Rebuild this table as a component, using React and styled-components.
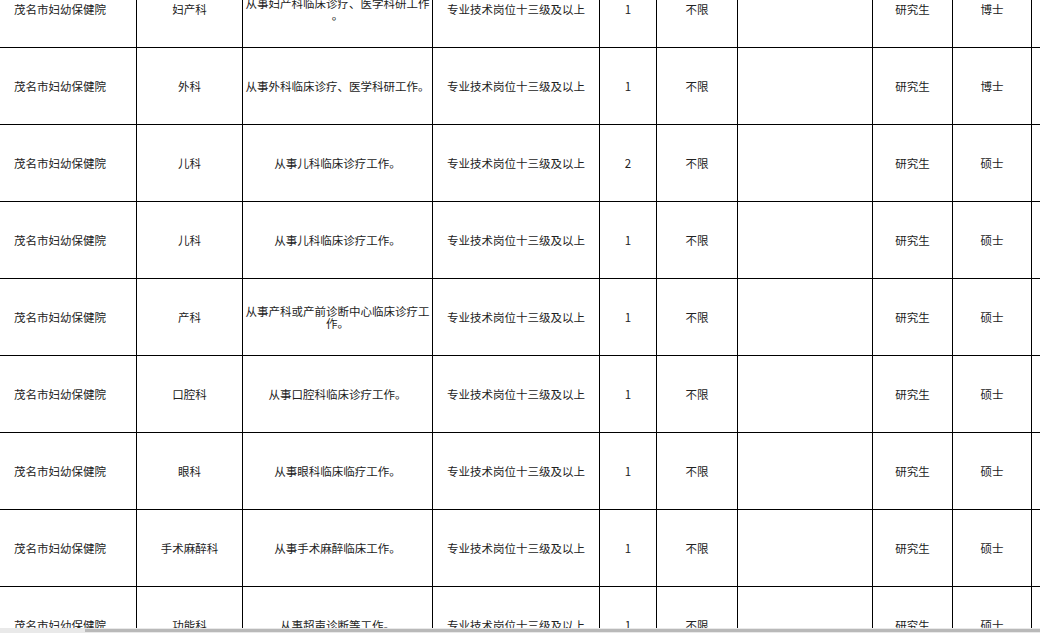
import React from 'react';
import styled, { createGlobalStyle } from 'styled-components';

const GlobalStyle = createGlobalStyle`
	html, body {
		margin: 0;
		padding: 0;
		background: #ffffff;
	}
	body {
		font-family: "Noto Sans CJK SC", "Liberation Sans", sans-serif;
	}
`;

const Page = styled.div`
	display: flex;
	flex-direction: column;
	width: 1040px;
	height: 633px;
	overflow: hidden;
`;

const Viewport = styled.div`
	flex: 1;
	overflow: hidden;
`;

const Sheet = styled.div`
	margin-top: -29px;
	margin-left: -16px;
	width: 1160px;
`;

const columns = '153px 106px 190px 167px 57px 81px 135px 80px 79px 112px';

const Row = styled.div`
	display: grid;
	grid-template-columns: ${columns};
	height: 77px;
`;

const Cell = styled.div`
	display: flex;
	align-items: center;
	justify-content: center;
	text-align: center;
	padding: 0 1px;
	border-right: 1px solid #000;
	border-bottom: 1px solid #000;
	font-size: 11.5px;
	line-height: 12px;
	color: #222;
	line-break: anywhere;
	overflow: hidden;
`;

const ScrollTrack = styled.div`
	height: 5px;
	background: #e9e9e9;
	display: flex;
	align-items: center;
	padding-left: 85px;
`;

const ScrollThumb = styled.div`
	flex: 1;
	height: 3px;
	background: #b9b9b9;
`;

const rows = [
	['妇产科', '从事妇产科临床诊疗、医学科研工作。', '1', '博士'],
	['外科', '从事外科临床诊疗、医学科研工作。', '1', '博士'],
	['儿科', '从事儿科临床诊疗工作。', '2', '硕士'],
	['儿科', '从事儿科临床诊疗工作。', '1', '硕士'],
	['产科', '从事产科或产前诊断中心临床诊疗工作。', '1', '硕士'],
	['口腔科', '从事口腔科临床诊疗工作。', '1', '硕士'],
	['眼科', '从事眼科临床临疗工作。', '1', '硕士'],
	['手术麻醉科', '从事手术麻醉临床工作。', '1', '硕士'],
	['功能科', '从事超声诊断等工作。', '1', '硕士'],
];

const App = () => (
	<Page>
		<GlobalStyle />
		<Viewport>
			<Sheet>
				{rows.map(([dept, duty, count, degree], i) => (
					<Row key={i}>
						<Cell>茂名市妇幼保健院</Cell>
						<Cell>{dept}</Cell>
						<Cell>{duty}</Cell>
						<Cell>专业技术岗位十三级及以上</Cell>
						<Cell>{count}</Cell>
						<Cell>不限</Cell>
						<Cell />
						<Cell>研究生</Cell>
						<Cell>{degree}</Cell>
						<Cell />
					</Row>
				))}
			</Sheet>
		</Viewport>
		<ScrollTrack>
			<ScrollThumb />
		</ScrollTrack>
	</Page>
);

export default App;
